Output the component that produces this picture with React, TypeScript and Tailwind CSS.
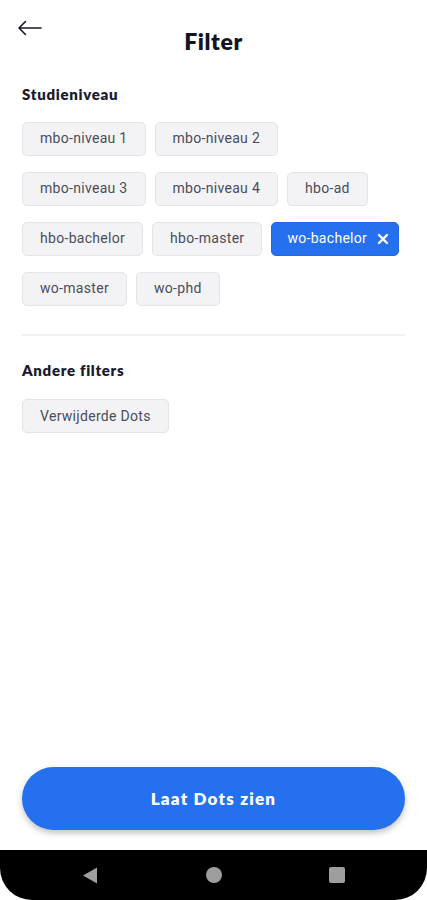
import React from "react";

const heading = { fontFamily: "Lato, 'Noto Sans', sans-serif" };

function Chip({ label, active }: { label: string; active?: boolean }) {
  if (active) {
    return (
      <div className="h-[34px] flex items-center gap-[10px] pl-[15px] pr-[9px] rounded-[5px] bg-[#2470ee] border border-[#2168e0] text-white text-[14px] tracking-[0.3px]">
        <span>{label}</span>
        <svg width="12" height="12" viewBox="0 0 12 12">
          <path d="M2 2 L10 10 M10 2 L2 10" stroke="white" strokeWidth="2.4" strokeLinecap="round" />
        </svg>
      </div>
    );
  }
  return (
    <div className="h-[34px] flex items-center px-[17px] rounded-[5px] bg-[#f3f3f5] border border-[#e4e4e7] text-[#4a4d5c] text-[14px] tracking-[0.3px]">
      {label}
    </div>
  );
}

export default function App() {
  const rows = [
    ["mbo-niveau 1", "mbo-niveau 2"],
    ["mbo-niveau 3", "mbo-niveau 4", "hbo-ad"],
    ["hbo-bachelor", "hbo-master", "wo-bachelor"],
    ["wo-master", "wo-phd"],
  ];
  return (
    <div className="w-[427px] h-[900px] bg-white flex flex-col overflow-hidden" style={{ fontFamily: "Roboto, 'Noto Sans', sans-serif" }}>
      <div className="relative h-[66px]">
        <svg className="absolute left-[17px] top-[20px]" width="26" height="16" viewBox="0 0 26 16">
          <path d="M24 8 H2 M8.5 1.5 L2 8 L8.5 14.5" stroke="#1a1a24" strokeWidth="1.6" fill="none" strokeLinecap="round" strokeLinejoin="round" />
        </svg>
        <div className="pt-[24px] text-center text-[23px] font-extrabold text-[#14141f] tracking-[0.6px]" style={heading}>
          Filter
        </div>
      </div>
      <div className="px-[22px]">
        <div className="mt-[17px] text-[15px] font-extrabold text-[#1b1b2e] tracking-[0.7px]" style={heading}>
          Studieniveau
        </div>
        <div className="mt-[16px] flex flex-col gap-[16px]">
          {rows.map((row, i) => (
            <div key={i} className="flex gap-[9px]">
              {row.map((l) => (
                <Chip key={l} label={l} active={l === "wo-bachelor"} />
              ))}
            </div>
          ))}
        </div>
        <div className="mt-[28px] h-[2px] bg-[#f0f0f2]" />
        <div className="mt-[23px] text-[15px] font-extrabold text-[#1b1b2e] tracking-[0.7px]" style={heading}>
          Andere filters
        </div>
        <div className="mt-[18px] flex">
          <Chip label="Verwijderde Dots" />
        </div>
      </div>
      <div className="mt-auto px-[22px] pb-[20px]">
        <div className="h-[63px] rounded-full bg-[#2470ee] shadow-[0_3px_6px_rgba(0,0,0,0.25)] flex items-center justify-center text-white text-[17px] font-extrabold tracking-[1.2px]" style={heading}>
          Laat Dots zien
        </div>
      </div>
      <div className="h-[50px] bg-black rounded-b-[32px] flex items-center justify-between px-[82px]">
        <svg width="16" height="17" viewBox="0 0 16 17">
          <path d="M15 0.5 V16.5 L1 8.5 Z" fill="#9e9e9e" />
        </svg>
        <div className="w-[16px] h-[16px] rounded-full bg-[#9e9e9e]" />
        <div className="w-[16px] h-[16px] rounded-[2px] bg-[#9e9e9e]" />
      </div>
    </div>
  );
}
